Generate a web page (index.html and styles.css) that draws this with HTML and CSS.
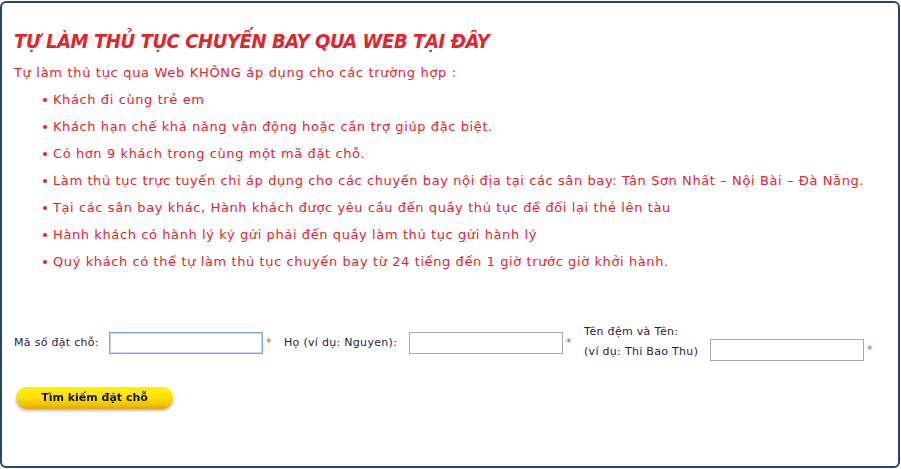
FILE: index.html
```html
<!DOCTYPE html>
<html lang="vi">
<head>
<meta charset="utf-8">
<title>Tự làm thủ tục chuyến bay qua web</title>
<link rel="stylesheet" href="styles.css">
</head>
<body>
<div class="box">
  <h1 class="title">TỰ LÀM THỦ TỤC CHUYẾN BAY QUA WEB TẠI ĐÂY</h1>
  <p class="intro">Tự làm thủ tục qua Web KHÔNG áp dụng cho các trường hợp :</p>
  <ul class="rules">
    <li>Khách đi cùng trẻ em</li>
    <li>Khách hạn chế khả năng vận động hoặc cần trợ giúp đặc biệt.</li>
    <li>Có hơn 9 khách trong cùng một mã đặt chỗ.</li>
    <li>Làm thủ tục trực tuyến chỉ áp dụng cho các chuyến bay nội địa tại các sân bay: Tân Sơn Nhất – Nội Bài – Đà Nẵng.</li>
    <li>Tại các sân bay khác, Hành khách được yêu cầu đến quầy thủ tục để đổi lại thẻ lên tàu</li>
    <li>Hành khách có hành lý ký gửi phải đến quầy làm thủ tục gửi hành lý</li>
    <li>Quý khách có thể tự làm thủ tục chuyến bay từ 24 tiếng đến 1 giờ trước giờ khởi hành.</li>
  </ul>
  <form class="form">
    <div class="field">
      <label class="label label-pnr" for="pnr">Mã số đặt chỗ:</label>
      <input class="input focus" id="pnr" type="text" autofocus>
      <span class="req">*</span>
    </div>
    <div class="field">
      <label class="label label-last" for="last">Họ (ví dụ: Nguyen):</label>
      <input class="input" id="last" type="text">
      <span class="req">*</span>
    </div>
    <div class="field field-low">
      <label class="label label-two" for="first"><span class="line">Tên đệm và Tên:</span><span class="line">(ví dụ: Thi Bao Thu)</span></label>
      <input class="input" id="first" type="text">
      <span class="req">*</span>
    </div>
  </form>
  <div class="actions">
    <button class="btn" type="button">Tìm kiếm đặt chỗ</button>
  </div>
</div>
</body>
</html>
```
FILE: styles.css
```css
html, body {
  margin: 0;
  padding: 0;
  background: #ffffff;
}
body {
  width: 901px;
  height: 469px;
  overflow: hidden;
  font-family: "DejaVu Sans", Verdana, sans-serif;
}
.box {
  box-sizing: border-box;
  margin: 1px 1px 0 0;
  height: 467px;
  border: 2px solid #27446f;
  border-radius: 6px;
  padding: 26px 12px 0 12px;
}
.title {
  margin: 0;
  font-family: "DejaVu Sans Condensed", "DejaVu Sans", sans-serif;
  font-size: 20px;
  line-height: 24px;
  font-weight: bold;
  font-style: italic;
  letter-spacing: -0.4px;
  color: #e6222a;
}
.intro {
  margin: 11px 0 0 0;
  font-size: 13px;
  line-height: 17px;
  letter-spacing: 0.68px;
  color: #e8232b;
}
.rules {
  margin: 0;
  padding: 0 0 0 39px;
  list-style: none;
}
.rules li {
  position: relative;
  margin-top: 10px;
  font-size: 13px;
  line-height: 17px;
  letter-spacing: 0.6px;
  color: #e8232b;
}
.rules li::before {
  content: "";
  position: absolute;
  left: -10px;
  top: 7px;
  width: 4px;
  height: 4px;
  border-radius: 50%;
  background: #e8232b;
}
.form {
  display: flex;
  align-items: flex-start;
  margin-top: 52px;
}
.field {
  display: flex;
  align-items: center;
  flex-shrink: 0;
  margin-top: 10px;
}
.field-low {
  margin-top: 0;
  align-items: flex-end;
}
.label {
  box-sizing: border-box;
  flex-shrink: 0;
  font-size: 11px;
  line-height: 14px;
  letter-spacing: 0.3px;
  white-space: nowrap;
  color: #2b2233;
}
.label-pnr {
  width: 95px;
}
.label-last {
  width: 125px;
}
.label-two {
  display: flex;
  flex-direction: column;
  width: 126px;
  line-height: 20px;
}
.input {
  box-sizing: border-box;
  flex-shrink: 0;
  width: 154px;
  height: 22px;
  margin: 0;
  border: 1px solid #a9a9a9;
  background: #fff;
  font-family: "DejaVu Sans", Verdana, sans-serif;
  font-size: 12px;
  padding: 1px 4px;
  outline: none;
}
.field-low .input {
  margin-bottom: 1px;
}
.field-low .req {
  margin-bottom: 5px;
}
.input.focus {
  border-color: #7aa4e3;
  box-shadow: 0 0 0 1px #c5d9f6 inset;
}
.req {
  box-sizing: border-box;
  width: 21px;
  padding-left: 3px;
  font-size: 11px;
  line-height: 14px;
  color: #b06a1d;
}
.field-low .req {
  width: auto;
}
.actions {
  margin-top: 24px;
  padding-left: 2px;
}
.btn {
  width: 157px;
  height: 22px;
  border: none;
  border-radius: 11px;
  background: linear-gradient(#fff200 0%, #fbe200 45%, #f2c400 80%, #e3a400 100%);
  box-shadow: 0 2px 3px rgba(0,0,0,0.28);
  font-family: "DejaVu Sans", Verdana, sans-serif;
  font-size: 11px;
  font-weight: bold;
  color: #111;
  padding: 0;
}
```
